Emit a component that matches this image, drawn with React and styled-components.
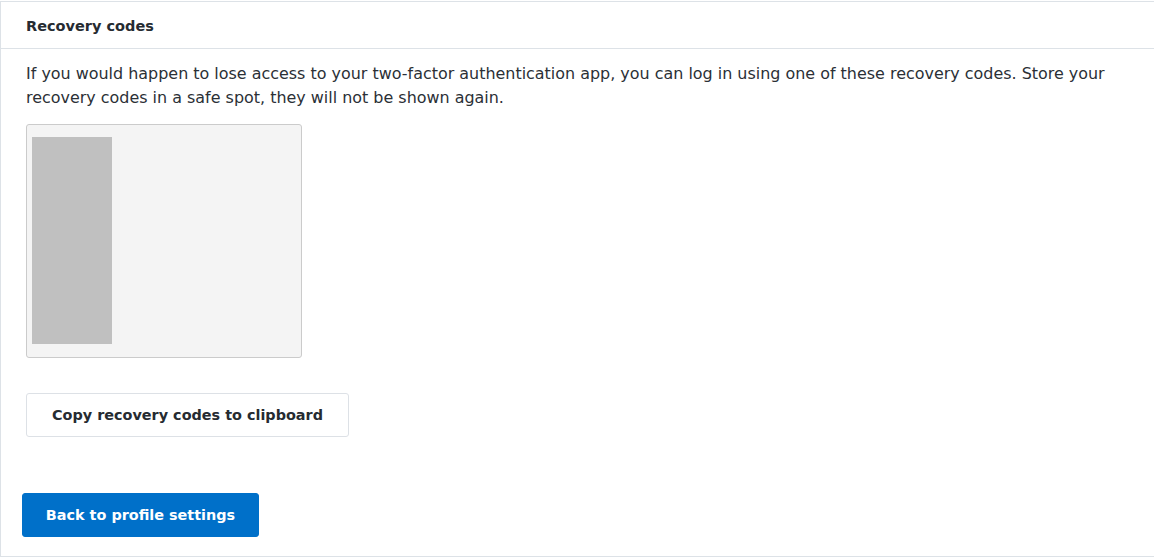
import React from "react";
import styled, { createGlobalStyle } from "styled-components";

const Global = createGlobalStyle`
  html, body { margin: 0; padding: 0; background: #fff; }
  body { font-family: "DejaVu Sans", "Open Sans", sans-serif; color: #2b3036; }
`;

const Card = styled.section`
  margin-top: 1px;
  width: 1154px;
  height: 556px;
  box-sizing: border-box;
  border: 1px solid #dde2e7;
  border-right: none;
  display: flex;
  flex-direction: column;
`;

const Header = styled.header`
  height: 47px;
  box-sizing: border-box;
  border-bottom: 1px solid #dde2e7;
  display: flex;
  align-items: center;
  padding: 2px 0 0 25px;
  font-size: 14.5px;
  font-weight: 700;
  color: #262b31;
`;

const Body = styled.div`
  padding: 13px 25px 0 25px;
  display: flex;
  flex-direction: column;
  align-items: flex-start;
`;

const Text = styled.p`
  margin: 0;
  font-size: 15.95px;
  line-height: 24px;
  color: #2b3036;
  max-width: 1095px;
`;

const CodeBox = styled.div`
  margin-top: 14px;
  width: 276px;
  height: 234px;
  box-sizing: border-box;
  background: #f4f4f4;
  border: 1px solid #cbcbcb;
  border-radius: 3px;
  padding: 12px 0 0 5px;
`;

const CodeMask = styled.div`
  width: 80px;
  height: 207px;
  background: #c0c0c0;
`;

const Button = styled.button`
  height: 44px;
  box-sizing: border-box;
  border-radius: 3px;
  font-family: inherit;
  font-size: 14.4px;
  font-weight: 700;
  padding: 0;
  cursor: pointer;
  border: 1px solid ${(p) => (p.$primary ? "#0070c9" : "#dde1e6")};
  background: ${(p) => (p.$primary ? "#0070c9" : "#fff")};
  color: ${(p) => (p.$primary ? "#fff" : "#262b31")};
`;

const CopyButton = styled(Button)`
  margin-top: 35px;
  width: 323px;
`;

const BackButton = styled(Button)`
  margin-top: 56px;
  margin-left: -4px;
  width: 237px;
`;

export default function App() {
  return (
    <>
      <Global />
      <Card>
        <Header>Recovery codes</Header>
        <Body>
          <Text>
            If you would happen to lose access to your two-factor authentication app, you can log in using one of these
            recovery codes. Store your recovery codes in a safe spot, they will not be shown again.
          </Text>
          <CodeBox>
            <CodeMask />
          </CodeBox>
          <CopyButton>Copy recovery codes to clipboard</CopyButton>
          <BackButton $primary>Back to profile settings</BackButton>
        </Body>
      </Card>
    </>
  );
}
